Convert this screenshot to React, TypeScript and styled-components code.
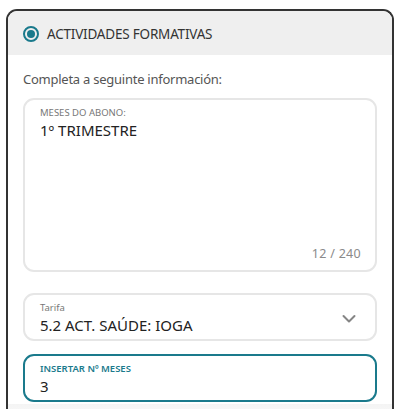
import styled, { createGlobalStyle } from 'styled-components';

const GlobalStyle = createGlobalStyle`
  html, body {
    margin: 0;
    padding: 0;
    background: #ffffff;
    font-family: 'Noto Sans', 'Open Sans', sans-serif;
  }
`;

const Page = styled.div`
  padding: 9px 6px 0 6px;
  height: 409px;
  box-sizing: border-box;
  overflow: hidden;
`;

const Card = styled.section`
  border: 2px solid #333333;
  border-bottom: none;
  border-radius: 11px 11px 0 0;
  overflow: hidden;
  background: #ffffff;
`;

const Header = styled.div`
  display: flex;
  align-items: center;
  gap: 8px;
  height: 44px;
  padding: 1px 15px 0 15px;
  box-sizing: border-box;
  background: #efefef;
`;

const Radio = styled.span`
  width: 16px;
  height: 16px;
  border: 2px solid #1a7a8c;
  border-radius: 50%;
  display: flex;
  align-items: center;
  justify-content: center;
  box-sizing: border-box;
  flex-shrink: 0;

  &::after {
    content: '';
    width: 8px;
    height: 8px;
    border-radius: 50%;
    background: #1a7a8c;
  }
`;

const HeaderTitle = styled.span`
  font-size: 13.5px;
  color: #333333;
  letter-spacing: -0.2px;
`;

const Body = styled.div`
  display: flex;
  flex-direction: column;
  padding: 15px 15px 0 15px;
`;

const Intro = styled.p`
  margin: 0 0 10px 0;
  font-size: 13px;
  color: #555555;
  letter-spacing: -0.25px;
`;

const Field = styled.div<{ $active?: boolean; $height: number }>`
  position: relative;
  display: flex;
  flex-direction: column;
  height: ${(p) => p.$height}px;
  box-sizing: border-box;
  padding: 7px 15px 0 15px;
  border: 2px solid ${(p) => (p.$active ? '#1a7a8c' : '#e6e6e6')};
  border-radius: 11px;
`;

const Label = styled.span<{ $active?: boolean }>`
  font-size: 9.5px;
  line-height: 12px;
  color: ${(p) => (p.$active ? '#1a7a8c' : '#777777')};
  font-weight: ${(p) => (p.$active ? 600 : 400)};
`;

const Value = styled.span`
  font-size: 15px;
  line-height: 20px;
  color: #222222;
  margin-top: 1px;
`;

const Counter = styled.span`
  position: absolute;
  right: 14px;
  bottom: 8px;
  font-size: 12.5px;
  color: #8a8a8a;
  letter-spacing: 0.3px;
`;

const SelectRow = styled.div`
  display: flex;
  align-items: center;
  justify-content: space-between;
`;

const Chevron = styled.svg`
  width: 14px;
  height: 10px;
  margin-right: 4px;
  margin-top: -12px;
`;

const Gap = styled.div<{ $size: number }>`
  height: ${(p) => p.$size}px;
  flex-shrink: 0;
`;

const Footer = styled.div`
  height: 10px;
  background: linear-gradient(#f4f4f4, #f8f8f8);
  margin: 0 -15px;
`;

const App = () => {
  return (
    <>
      <GlobalStyle />
      <Page>
        <Card>
          <Header>
            <Radio />
            <HeaderTitle>ACTIVIDADES FORMATIVAS</HeaderTitle>
          </Header>
          <Body>
            <Intro>Completa a seguinte información:</Intro>
            <Field $height={174}>
              <Label>MESES DO ABONO:</Label>
              <Value>1º TRIMESTRE</Value>
              <Counter>12 / 240</Counter>
            </Field>
            <Gap $size={21} />
            <Field $height={48}>
              <Label>Tarifa</Label>
              <SelectRow>
                <Value>5.2 ACT. SAÚDE: IOGA</Value>
                <Chevron viewBox="0 0 14 10" fill="none" stroke="#858585" strokeWidth="2" strokeLinecap="round" strokeLinejoin="round">
                  <path d="M1.5 2l5.5 5.5 5.5-5.5" />
                </Chevron>
              </SelectRow>
            </Field>
            <Gap $size={13} />
            <Field $active $height={48}>
              <Label $active>INSERTAR Nº MESES</Label>
              <Value>3</Value>
            </Field>
            <Gap $size={2} />
            <Footer />
          </Body>
        </Card>
      </Page>
    </>
  );
};

export default App;
